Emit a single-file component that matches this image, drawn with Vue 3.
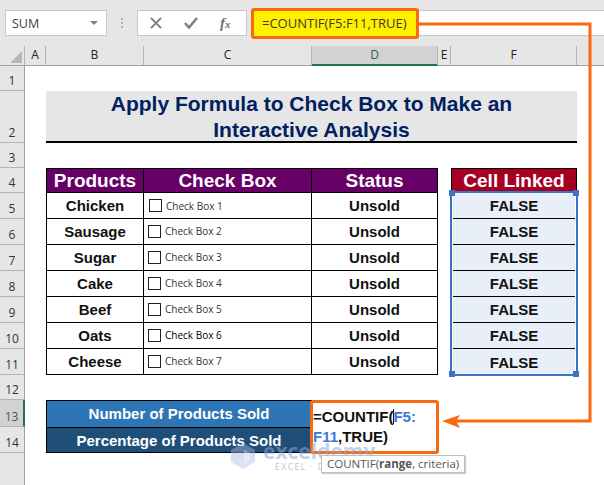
<template>
  <div class="excel">
    <div class="toolbar">
      <div class="name-box">
        <span>SUM</span>
        <i class="caret"></i>
      </div>
      <div class="grip"><b></b><b></b><b></b></div>
      <div class="fx-box">
        <svg width="12" height="12" viewBox="0 0 12 12"><path d="M1 1l10 10M11 1L1 11" stroke="#808080" stroke-width="1.8" fill="none" /></svg>
        <svg width="14" height="12" viewBox="0 0 14 12"><path d="M1 6l4 4.5L13 1" stroke="#808080" stroke-width="2.6" fill="none" /></svg>
        <span class="fx">f<small>x</small></span>
      </div>
      <div class="formula-input"></div>
    </div>

    <div class="sheet">
      <div class="corner"><i></i></div>
      <div
        v-for="c in columns"
        :key="c"
        class="col-head"
        :class="{ active: c === 'D' }"
      >{{ c }}</div>
      <div class="col-rest"></div>

      <div
        v-for="r in 14"
        :key="'r' + r"
        class="row-head"
        :class="{ active: r === 13 }"
        :style="{ gridRow: r + 1 }"
      >{{ r }}</div>
      <div class="row-head rest" style="grid-row: 16"></div>

      <div class="title">Apply Formula to Check Box to Make an<br />Interactive Analysis</div>

      <div class="th first" style="grid-column: 3">Products</div>
      <div class="th" style="grid-column: 4">Check Box</div>
      <div class="th" style="grid-column: 5">Status</div>
      <div class="th first linked" style="grid-column: 7">Cell Linked</div>

      <template v-for="(p, i) in products" :key="p.name">
        <div class="td name" :style="{ gridRow: i + 6, gridColumn: 3 }">{{ p.name }}</div>
        <div class="td check" :style="{ gridRow: i + 6, gridColumn: 4 }">
          <span class="box" :style="{ marginLeft: p.x + 'px', marginTop: p.y + 'px' }"></span>
          <span class="box-label" :class="{ dark: i === 5 }" :style="{ marginTop: 2 * p.y + 'px' }">{{ p.label }}</span>
        </div>
        <div class="td status" :style="{ gridRow: i + 6, gridColumn: 5 }">Unsold</div>
        <div class="td linked-cell" :class="{ last: i === 6 }" :style="{ gridRow: i + 6, gridColumn: 7 }">FALSE</div>
      </template>

      <div class="sum one">Number of Products Sold</div>
      <div class="sum two">Percentage of Products Sold</div>

      <!-- overlays -->
      <div class="range">
        <i class="h tl"></i><i class="h tr"></i><i class="h bl"></i><i class="h br"></i>
      </div>
    </div>

    <div class="formula-flag">=COUNTIF(F5:F11,TRUE)</div>

    <svg class="arrow" width="604" height="485" viewBox="0 0 604 485">
      <path d="M418 24H590V421H456" stroke="#f96a0e" stroke-width="3" fill="none" />
      <path d="M442 421L460 415L456 421L460 428Z" fill="#f96a0e" />
    </svg>

    <div class="edit-cell">=COUNTIF(<i class="cursor"></i><span class="ref">F5:<br />F11</span>,TRUE)</div>

    <div class="watermark">
      <svg width="24" height="26" viewBox="0 0 24 26"><path d="M12 0l12 7v12l-12 7L0 19V7z" fill="#a9bfe2" opacity=".45" /><path d="M13 7l6 3v8l-6 3z" fill="#fff" opacity=".35" /></svg>
      <div>
        <div class="wm-big">exceldemy</div>
        <div class="wm-small">EXCEL · DATA · BI</div>
      </div>
    </div>

    <div class="tip">COUNTIF(<b>range</b>, criteria)</div>
  </div>
</template>

<script setup>
const columns = ['A', 'B', 'C', 'D', 'E', 'F']

const products = [
  { name: 'Chicken', label: 'Check Box 1', x: 5, y: 0 },
  { name: 'Sausage', label: 'Check Box 2', x: 4, y: -1 },
  { name: 'Sugar', label: 'Check Box 3', x: 4, y: -1 },
  { name: 'Cake', label: 'Check Box 4', x: 4, y: -1 },
  { name: 'Beef', label: 'Check Box 5', x: 4, y: -1 },
  { name: 'Oats', label: 'Check Box 6', x: 4, y: -1 },
  { name: 'Cheese', label: 'Check Box 7', x: 4, y: -1 }
]
</script>

<style>
html, body { margin: 0; background: #e6e6e6; overflow: hidden; }
</style>

<style scoped>
.excel {
  position: relative;
  width: 604px;
  height: 485px;
  overflow: hidden;
  background: #e6e6e6;
  font-family: "Liberation Sans", Arial, sans-serif;
}

.toolbar {
  height: 46px;
  box-sizing: border-box;
  padding: 10px 0 0 5px;
  display: flex;
  align-items: flex-start;
}
.name-box {
  width: 102px;
  height: 26px;
  box-sizing: border-box;
  background: #fff;
  border: 1px solid #c8c8c8;
  display: flex;
  align-items: center;
  justify-content: space-between;
  padding: 0 8px 0 6px;
  font: 12.5px "Open Sans", sans-serif;
  color: #404040;
}
.caret {
  border: 4px solid transparent;
  border-top: 4px solid #808080;
  border-bottom: 0;
}
.grip {
  width: 30px;
  height: 26px;
  display: flex;
  flex-direction: column;
  align-items: center;
  justify-content: center;
  gap: 2px;
}
.grip b { width: 2px; height: 2px; background: #b0b0b0; }
.fx-box {
  width: 110px;
  height: 26px;
  box-sizing: border-box;
  background: #fff;
  border: 1px solid #c8c8c8;
  display: flex;
  align-items: center;
  gap: 22px;
  padding-left: 12px;
}
.fx {
  font: italic bold 15px "Liberation Serif", serif;
  color: #707070;
}
.fx small { font-size: 11px; }
.formula-input {
  flex: 1;
  height: 26px;
  margin-left: 4px;
  box-sizing: border-box;
  background: #fff;
  border: 1px solid #c8c8c8;
  border-right: 0;
}

.sheet {
  position: relative;
  background: #fff;
  display: grid;
  grid-template-columns: 25px 21px 98px 168px 126px 13px 126px 27px;
  grid-template-rows: 20px 25px 52px 25px 25px repeat(7, 26px) 25px 27px 26px 32px;
}
.corner {
  background: #e6e6e6;
  border-right: 1px solid #b4b4b4;
  border-bottom: 1px solid #a0a0a0;
  box-sizing: border-box;
  position: relative;
}
.corner i {
  position: absolute;
  right: 2px;
  bottom: 2px;
  width: 0;
  height: 0;
  border-left: 12px solid transparent;
  border-bottom: 12px solid #b8b8b8;
}
.col-head, .col-rest {
  background: #e6e6e6;
  border-right: 1px solid #b4b4b4;
  border-bottom: 1px solid #a0a0a0;
  box-sizing: border-box;
  font: 12px/18px "Open Sans", sans-serif;
  color: #222;
  text-align: center;
}
.col-rest { border-right: 0; }
.col-head.active {
  background: #d2d2d2;
  color: #1f6b48;
  border-bottom: 2px solid #217346;
}
.row-head {
  grid-column: 1;
  background: #e6e6e6;
  border-right: 1px solid #a0a0a0;
  border-bottom: 1px solid #b4b4b4;
  box-sizing: border-box;
  padding-bottom: 1px;
  font: 12px/16px "Open Sans", sans-serif;
  color: #333;
  display: flex;
  align-items: flex-end;
  justify-content: center;
}
.row-head.rest { border-bottom: 0; }
.row-head.active {
  background: #d2d2d2;
  color: #1f6b48;
  border-right: 2px solid #217346;
}

.title {
  grid-row: 3;
  grid-column: 3 / 8;
  background: #e6e6e6;
  border-bottom: 2px solid #000;
  box-sizing: border-box;
  color: #002060;
  font-size: 21px;
  font-weight: 700;
  line-height: 26px;
  text-align: center;
}

.th {
  grid-row: 5;
  background: #660066;
  color: #fff;
  font-size: 19px;
  font-weight: 700;
  line-height: 24px;
  text-align: center;
  border: 1px solid #000;
  border-left-width: 0;
  box-sizing: border-box;
}
.th.first { border-left-width: 1px; }
.th.linked { background: #a50021; }
.td {
  border-right: 1px solid #000;
  border-bottom: 1px solid #000;
  box-sizing: border-box;
  font-size: 15px;
  font-weight: 700;
  color: #111;
  display: flex;
  align-items: center;
  justify-content: center;
}
.td.name { border-left: 1px solid #000; }
.td.check {
  justify-content: flex-start;
  font-weight: 400;
}
.box {
  width: 13px;
  height: 13px;
  box-sizing: border-box;
  border: 1px solid #222;
  flex: none;
}
.box-label {
  margin-left: 4px;
  font: 10px "Open Sans", sans-serif;
  color: #333;
}
.box-label.dark { color: #000; }
.linked-cell {
  background: #e9eff8;
  border-right: 0;
  margin: 0 2px;
}
.linked-cell.last { border-bottom: 0; }

.sum {
  grid-column: 3 / 5;
  color: #fff;
  font-size: 15px;
  font-weight: 700;
  text-align: center;
  border: 1px solid #000;
  box-sizing: border-box;
  line-height: 25px;
}
.sum.one {
  grid-row: 14;
  background: #2e75b6;
  border-bottom: 0;
}
.sum.two {
  grid-row: 15;
  background: #1f4e79;
}

.range {
  position: absolute;
  left: 450px;
  top: 145px;
  width: 128px;
  height: 185px;
  box-sizing: border-box;
  border: 2px solid #3c73c8;
}
.h {
  position: absolute;
  width: 6px;
  height: 6px;
  background: #3c73c8;
}
.tl { left: -3px; top: -3px; }
.tr { right: -3px; top: -3px; }
.bl { left: -3px; bottom: -3px; }
.br { right: -3px; bottom: -3px; }

.formula-flag {
  position: absolute;
  left: 251px;
  top: 8px;
  width: 168px;
  height: 31px;
  box-sizing: border-box;
  background: #ffef00;
  border: 3px solid #f96a0e;
  border-radius: 3px;
  padding-left: 8px;
  font: 13px/25px "Open Sans", sans-serif;
  color: #3c3c1e;
}
.arrow {
  position: absolute;
  left: 0;
  top: 0;
  pointer-events: none;
}

.edit-cell {
  position: absolute;
  left: 310px;
  top: 400px;
  width: 129px;
  height: 54px;
  box-sizing: border-box;
  background: #fff;
  border: 3px solid #f96a0e;
  border-radius: 3px;
  padding-top: 4px;
  font-size: 15px;
  font-weight: 700;
  line-height: 20px;
  color: #111;
}
.cursor {
  display: inline-block;
  width: 1px;
  height: 15px;
  margin-right: -1px;
  background: #111;
  vertical-align: -2px;
}
.ref { color: #3c78d8; }

.watermark {
  position: absolute;
  left: 231px;
  top: 443px;
  display: flex;
  gap: 8px;
}
.wm-big {
  font: 700 21px/17px "Open Sans", sans-serif;
  color: rgba(140, 168, 222, 0.55);
}
.wm-small {
  margin: 1px 0 0 12px;
  font: 8.5px/12px "Open Sans", sans-serif;
  color: #c4c4c4;
  letter-spacing: 1.5px;
  white-space: nowrap;
}

.tip {
  position: absolute;
  left: 321px;
  top: 455px;
  width: 144px;
  height: 18px;
  box-sizing: border-box;
  background: #fff;
  border: 1px solid #c0c0c0;
  box-shadow: 1px 1px 1px #ccc;
  font: 11.5px/16px "Open Sans", sans-serif;
  color: #555;
  padding-left: 5px;
  white-space: nowrap;
}
</style>
